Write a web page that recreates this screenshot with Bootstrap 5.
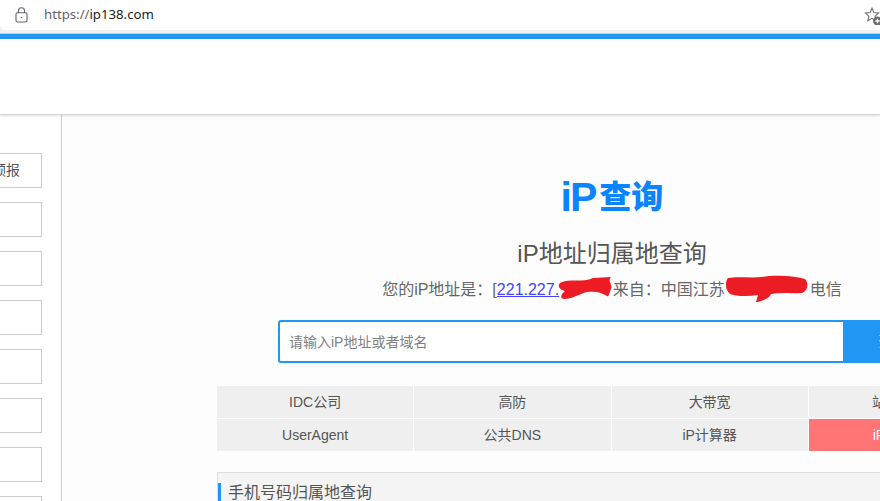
<!DOCTYPE html>
<html lang="zh-CN">
<head>
<meta charset="utf-8">
<title>iP查询</title>
<link href="https://cdn.jsdelivr.net/npm/bootstrap@5.3.0/dist/css/bootstrap.min.css" rel="stylesheet">
<style>
html,body{height:501px;overflow:hidden}
body{font-family:"Liberation Sans","Noto Sans CJK SC",sans-serif;font-size:14px;color:#666;background:#fff}
.chrome-strip{height:34px;background:#f1f1f1;border-bottom:1px solid #cfcfcf}
.addr-bar{height:30px;background:#fff;border-bottom-left-radius:6px;padding-left:15px;gap:16px}
.addr-url{font-family:"Noto Sans",sans-serif;font-size:13.2px;color:#5f6368;width:112px;white-space:nowrap}
.addr-url b{font-weight:400;color:#202124}
.star-slot{margin-left:auto;width:16px;height:20px;overflow:hidden;flex:none}
.top-line{height:5px;background:#2196f3}
.site-head{height:76px;background:#fff;border-bottom:1px solid #d4d4d4;box-shadow:0 1px 3px rgba(0,0,0,.12);position:relative}
.page-wrap{height:386px;overflow:hidden}
.side-col{width:62px;flex:none;border-right:1px solid #cfcfcf;padding:38px 19px 0 0;background:#fff;overflow:hidden}
.side-item{width:120px;height:35px;flex:none;margin-bottom:14px;border:1px solid #cccccc;background:#fff;font-size:14px;color:#555;line-height:33px;padding-right:21px;text-align:right;white-space:nowrap}
.main-col{flex:1 1 auto;background:#fdfdfd;padding-left:155px;overflow:hidden;min-width:0}
.main-inner{width:790px;flex:none}
.logo-text{height:42px;font-size:41px;font-weight:700;line-height:42px;color:#0a84ff;margin:61px 0 0;white-space:nowrap;overflow:visible}
.logo-latin{letter-spacing:-2px;margin-right:4px;line-height:42px}
.logo-cjk{font-size:32px;font-weight:900;line-height:42px}
.sub-title{font-size:24px;font-weight:400;line-height:30px;color:#555;margin:21px 0 0}
.my-ip{font-size:16px;line-height:22px;color:#666;margin:10px 0 0;white-space:nowrap}
.my-ip a{color:#4444ff}
.ip-wrap{display:inline-block;position:relative;width:116px;text-align:left}
.loc-wrap{display:inline-block;position:relative;width:85px}
.scribble{position:absolute;pointer-events:none}
.search-box{width:668px;height:43px;margin:19px auto 0}
.search-box .form-control{height:43px;border:2px solid #2196f3;border-right:0;border-radius:3px 0 0 3px;font-size:14px;color:#777;padding:0 10px 0 9px;box-shadow:none;background:#fff}
.search-box .form-control::placeholder{color:#808080;opacity:1}
.search-btn{width:103px;flex:none;background:#2196f3;border:0;border-radius:0;color:#fff;font-size:16px}
.quick-grid{margin:23px 0 0 0;--bs-gutter-x:0;width:789px}
.quick-cell{height:33px;line-height:32px;background:#efefef;text-align:center;font-size:14px;color:#555;border-right:1px solid #fff;border-bottom:1px solid #fff;white-space:nowrap;text-decoration:none;display:block}
.quick-hot{background:#ff7575;color:#fff}
.phone-panel{margin-top:20px;height:80px;background:#f4f4f4;border:1px solid #ddd;border-bottom:0;padding-top:10px}
.phone-head{font-size:16px;font-weight:400;line-height:19px;color:#555;border-left:3px solid #2196f3;padding-left:7px;margin:0}
</style>
</head>
<body>
<div class="chrome-strip">
  <div class="addr-bar d-flex align-items-center">
    <svg width="13" height="16" viewBox="0 0 13 16" fill="none" stroke="#5f6368" stroke-width="1.1"><path d="M3.500 6V3.800a3 3 0 0 1 6 0V6"/><rect x="1" y="5.800" width="11" height="9.200" rx="1.500"/><circle cx="6.500" cy="10.500" r=".8" fill="#5f6368" stroke="none"/></svg>
    <span class="addr-url">https://<b>ip138.com</b></span>
    <span class="star-slot">
      <svg width="20" height="20" viewBox="0 0 20 20"><path d="M8 2.200l1.900 4.300 4.700.5-3.500 3.100 1 4.600L8 12.300l-4.100 2.400 1-4.600L1.400 7l4.700-.5z" fill="none" stroke="#6f6f6f" stroke-width="1.100"/><circle cx="13.500" cy="15" r="4.500" fill="#6f6f6f"/><path d="M11.300 15h4.400M13.500 12.800v4.400" stroke="#fff" stroke-width="1.300"/></svg>
    </span>
  </div>
</div>
<div class="top-line"></div>
<div class="site-head"></div>
<div class="page-wrap d-flex">
  <aside class="side-col d-flex flex-column align-items-end">
    <div class="side-item">天气预报</div>
    <div class="side-item"></div>
    <div class="side-item"></div>
    <div class="side-item"></div>
    <div class="side-item"></div>
    <div class="side-item"></div>
    <div class="side-item"></div>
    <div class="side-item"></div>
  </aside>
  <main class="main-col d-flex">
    <div class="main-inner text-center">
      <h1 class="logo-text d-flex justify-content-center align-items-center"><span class="logo-latin">iP</span><span class="logo-cjk">查询</span></h1>
      <h2 class="sub-title">iP地址归属地查询</h2>
      <p class="my-ip">您的iP地址是：[<span class="ip-wrap"><a href="#">221.227.</a><svg class="scribble" style="left:60px;top:-4px" width="56" height="26" viewBox="0 0 56 26"><path d="M3 8C12 3 26 8 36 3L54 2C50 6 56 9 54 14 52 19 52 22 50 21 44 17 38 16 30 17 24 18 18 23 8 24 2 24 4 19 8 16 3 15 0 11 3 8Z" fill="#ed1c24"/></svg></span>来自：中国江苏<span class="loc-wrap text-start">&nbsp;<svg class="scribble" style="left:0;top:-4px" width="84" height="28" viewBox="0 0 84 28"><path d="M3 3C14 1 30 4 44 1 58 0 74 2 80 4 84 8 83 16 77 18 66 19 56 17 46 19 44 24 35 27 31 27L33 20C22 22 10 21 5 19 0 15 0 6 3 3Z" fill="#ed1c24"/></svg></span>电信</p>
      <form class="search-box d-flex">
        <input class="form-control" type="text" placeholder="请输入iP地址或者域名">
        <button class="btn search-btn" type="button">查询</button>
      </form>
      <div class="row quick-grid">
        <div class="col-3"><a class="quick-cell" href="#">IDC公司</a></div>
        <div class="col-3"><a class="quick-cell" href="#">高防</a></div>
        <div class="col-3"><a class="quick-cell" href="#">大带宽</a></div>
        <div class="col-3"><a class="quick-cell" href="#">站群服务器</a></div>
        <div class="col-3"><a class="quick-cell" href="#">UserAgent</a></div>
        <div class="col-3"><a class="quick-cell" href="#">公共DNS</a></div>
        <div class="col-3"><a class="quick-cell" href="#">iP计算器</a></div>
        <div class="col-3"><a class="quick-cell quick-hot" href="#">iP反查域名</a></div>
      </div>
      <section class="phone-panel text-start">
        <h3 class="phone-head">手机号码归属地查询</h3>
      </section>
    </div>
  </main>
</div>
</body>
</html>
